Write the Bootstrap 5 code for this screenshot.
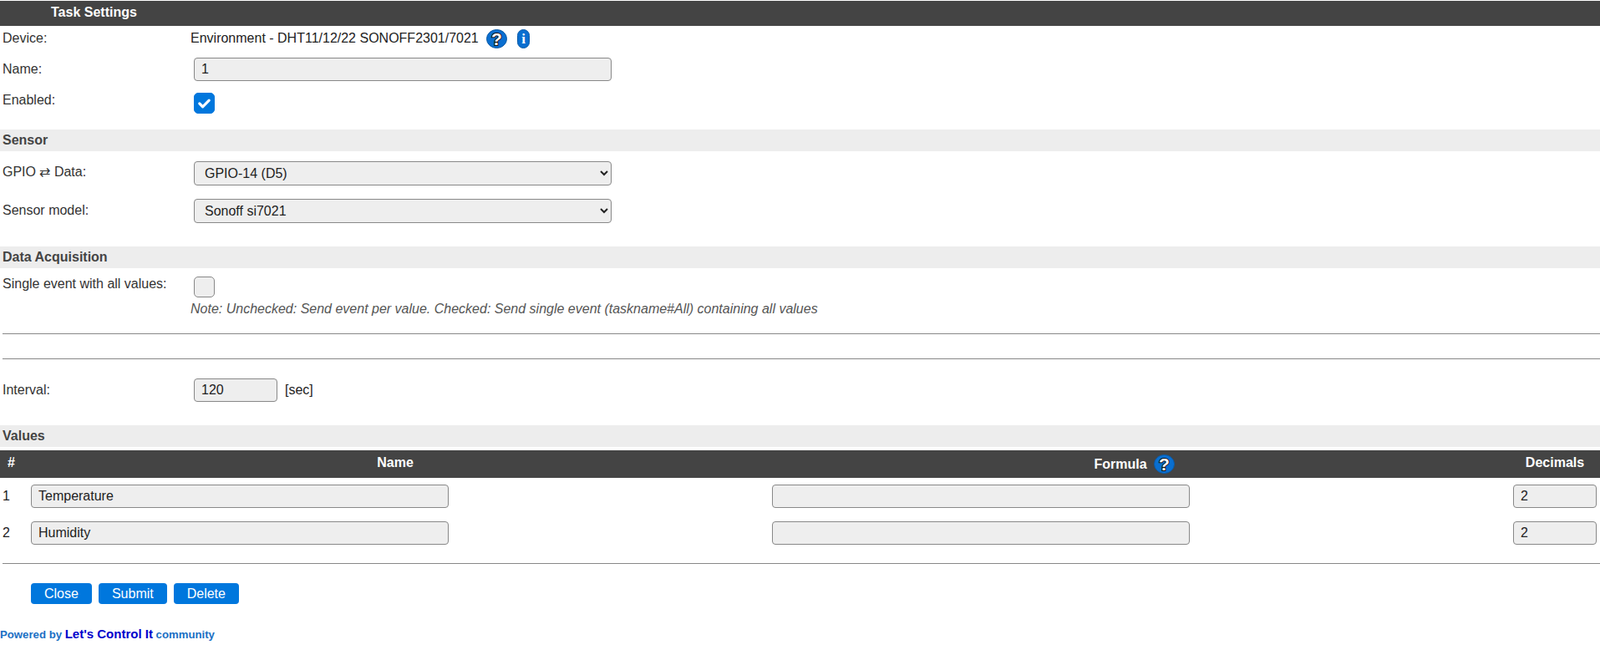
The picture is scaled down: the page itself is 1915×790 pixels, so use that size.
<!DOCTYPE html>
<html lang="en">
<head>
<meta charset="utf-8">
<title>Task Settings</title>
<link rel="stylesheet" href="https://cdn.jsdelivr.net/npm/bootstrap@5.3.0/dist/css/bootstrap.min.css">
<style>
body { font-family: "Liberation Sans", Arial, sans-serif; font-size: 16px; line-height: 20px; color: #333; background: #fff; overflow: hidden; }
.top-bar { margin-top: 1px; height: 30px; background: #444; color: #fff; font-weight: 700; line-height: 28px; padding-left: 61px; }
.band { height: 26px; background: #ededed; color: #444; font-weight: 700; line-height: 25px; padding-left: 3px; }
.fld { display: flex; align-items: flex-start; padding-left: 3px; }
.lbl { width: 225px; flex: none; }
.val { color: #222; }
.in-text { display: block; height: 28px; margin-left: 4px; padding: 0 8px; background: #eee; border: 1px solid #888; border-radius: 4px; font: inherit; color: #222; box-shadow: none; min-height: 0; }
.in-text:focus { background: #eee; border-color: #888; box-shadow: none; }
.w-long { width: 500px; }
.w-short { width: 100px; }
.in-sel { display: block; width: 500px; height: 29px; margin-left: 4px; padding: 0 8px; background: #eee; border: 1px solid #888; border-radius: 4px; font: inherit; color: #222; }
.tick.form-check-input { width: 25px; height: 25px; margin: 0 0 0 4px; background-color: #eee; border: 1px solid #888; border-radius: 5px; float: none; }
.tick.form-check-input:checked { background-color: #0077dd; border-color: #0077dd; background-size: 19px; background-position: center; background-image: url("data:image/svg+xml,%3csvg xmlns='http://www.w3.org/2000/svg' viewBox='0 0 20 20'%3e%3cpath fill='none' stroke='%23fff' stroke-width='3.4' stroke-linecap='round' stroke-linejoin='round' d='M4 10.5l4 4 8-8'/%3e%3c/svg%3e"); }
.r-device { height: 34px; }
.r-device .lbl { margin-top: 5px; }
.r-device .val { margin-top: 5px; }
.ico-q { display: block; width: 25px; height: 23px; margin-left: 9px; margin-top: 4px; }
.ico-i { display: block; width: 15px; height: 23px; margin-left: 12px; margin-top: 4px; }
.r-name { padding-top: 4px; }
.r-name .lbl { margin-top: 4px; }
.r-enabled { padding-top: 14px; padding-bottom: 19px; }
.r-enabled .lbl { margin-top: -1px; }
.r-gpio { padding-top: 12px; }
.r-gpio .lbl { margin-top: 3px; }
.r-model { padding-top: 16px; padding-bottom: 28px; }
.r-model .lbl { margin-top: 4px; }
.r-single { padding-top: 10px; }
.r-single .lbl { margin-top: -1px; }
.note { margin: 4px 0 0 228px; font-style: italic; color: #555; height: 20px; }
.rule { margin: 19px 0 0 3px; border: 0; border-top: 1px solid #888; opacity: 1; }
.rule-b { margin-top: 29px; }
.r-interval { padding-top: 23px; padding-bottom: 28px; align-items: flex-start; }
.r-interval .lbl { margin-top: 4px; }
.unit { margin: 4px 0 0 9px; color: #222; }
.vals-grid { display: grid; grid-template-columns: 22px 872px 872px 1fr; column-gap: 15px; }
.vals-head { margin-top: 4px; height: 33px; background: #444; color: #fff; font-weight: 700; align-items: center; padding-left: 0; }
.vals-head > div { text-align: center; }
.vals-head .hash { padding-left: 9px; text-align: left; margin-top: -4px; }
.vals-head .h-name { margin-top: -4px; }
.vals-head .h-form { display: flex; justify-content: center; align-items: center; gap: 8px; padding-right: 5px; }
.vals-head .h-dec { width: 100px; margin-top: -4px; }
.ico-qh { display: block; width: 25px; height: 23px; }
.vals-row { padding-top: 8px; }
.vals-row + .vals-row { padding-top: 16px; }
.vals-row .num { padding-left: 3px; margin-top: 4px; color: #222; }
.vals-row .in-text { margin-left: 0; width: 500px; }
.vals-row .in-text.w-dec { width: 100px; }
.rule-c { margin-top: 22px; }
.acts { padding: 23px 0 0 37px; gap: 8px; }
.btn.act { height: 25px; padding: 0 16px; background: #0077dd; border: 0; border-radius: 4px; color: #fff; font: inherit; line-height: 24px; }
.foot { margin-top: 26px; font-size: 13.2px; font-weight: 700; color: #1a6fc4; line-height: 20px; }
.foot a { color: #0000cc; font-size: 15px; text-decoration: none; }
</style>
</head>
<body>
<div class="top-bar">Task Settings</div>

<div class="fld r-device">
  <div class="lbl">Device:</div>
  <div class="val">Environment - DHT11/12/22 SONOFF2301/7021</div>
  <svg class="ico-q" viewBox="0 0 25 23" aria-hidden="true"><ellipse cx="12.5" cy="11.5" rx="12" ry="11" fill="#0a6fd0" stroke="#0b5aa6"/><text x="12.5" y="18.5" text-anchor="middle" font-family="Liberation Sans" font-weight="700" font-size="21" fill="#fff" stroke="#111" stroke-width="2" paint-order="stroke">?</text></svg>
  <svg class="ico-i" viewBox="0 0 15 23" aria-hidden="true"><rect x=".5" y=".5" width="14" height="22" rx="7" fill="#0a6fd0" stroke="#0b5aa6"/><text x="7.5" y="17" text-anchor="middle" font-family="Liberation Serif" font-weight="700" font-size="17" fill="#fff">i</text></svg>
</div>

<div class="fld r-name">
  <label class="lbl" for="tname">Name:</label>
  <input id="tname" class="in-text w-long" value="1">
</div>

<div class="fld r-enabled">
  <label class="lbl" for="ten">Enabled:</label>
  <input id="ten" class="form-check-input tick" type="checkbox" checked>
</div>

<div class="band">Sensor</div>

<div class="fld r-gpio">
  <label class="lbl" for="tg">GPIO ⇄ Data:</label>
  <select id="tg" class="in-sel"><option>GPIO-14 (D5)</option></select>
</div>
<div class="fld r-model">
  <label class="lbl" for="tm">Sensor model:</label>
  <select id="tm" class="in-sel"><option>Sonoff si7021</option></select>
</div>

<div class="band">Data Acquisition</div>

<div class="fld r-single">
  <label class="lbl" for="ts">Single event with all values:</label>
  <input id="ts" class="form-check-input tick" type="checkbox">
</div>
<div class="note">Note: Unchecked: Send event per value. Checked: Send single event (taskname#All) containing all values</div>
<hr class="rule">
<hr class="rule rule-b">

<div class="fld r-interval">
  <label class="lbl" for="ti">Interval:</label>
  <input id="ti" class="in-text w-short" value="120">
  <span class="unit">[sec]</span>
</div>

<div class="band">Values</div>

<div class="vals-grid vals-head">
  <div class="hash">#</div>
  <div class="h-name">Name</div>
  <div class="h-form"><span>Formula</span><svg class="ico-qh" viewBox="0 0 25 23" aria-hidden="true"><ellipse cx="12.5" cy="11.5" rx="12" ry="11" fill="#0a6fd0" stroke="#0b5aa6"/><text x="12.5" y="18.5" text-anchor="middle" font-family="Liberation Sans" font-weight="700" font-size="21" fill="#fff" stroke="#111" stroke-width="2" paint-order="stroke">?</text></svg></div>
  <div class="h-dec">Decimals</div>
</div>
<div class="vals-grid vals-row">
  <div class="num">1</div>
  <div><input class="in-text" value="Temperature"></div>
  <div><input class="in-text" value=""></div>
  <div><input class="in-text w-dec" value="2"></div>
</div>
<div class="vals-grid vals-row">
  <div class="num">2</div>
  <div><input class="in-text" value="Humidity"></div>
  <div><input class="in-text" value=""></div>
  <div><input class="in-text w-dec" value="2"></div>
</div>
<hr class="rule rule-c">

<div class="d-flex acts">
  <button class="btn act" type="button">Close</button>
  <button class="btn act" type="button">Submit</button>
  <button class="btn act" type="button">Delete</button>
</div>

<div class="foot">Powered by <a href="#">Let's Control It</a> community</div>

<script src="https://cdn.jsdelivr.net/npm/bootstrap@5.3.0/dist/js/bootstrap.bundle.min.js"></script>
</body>
</html>
